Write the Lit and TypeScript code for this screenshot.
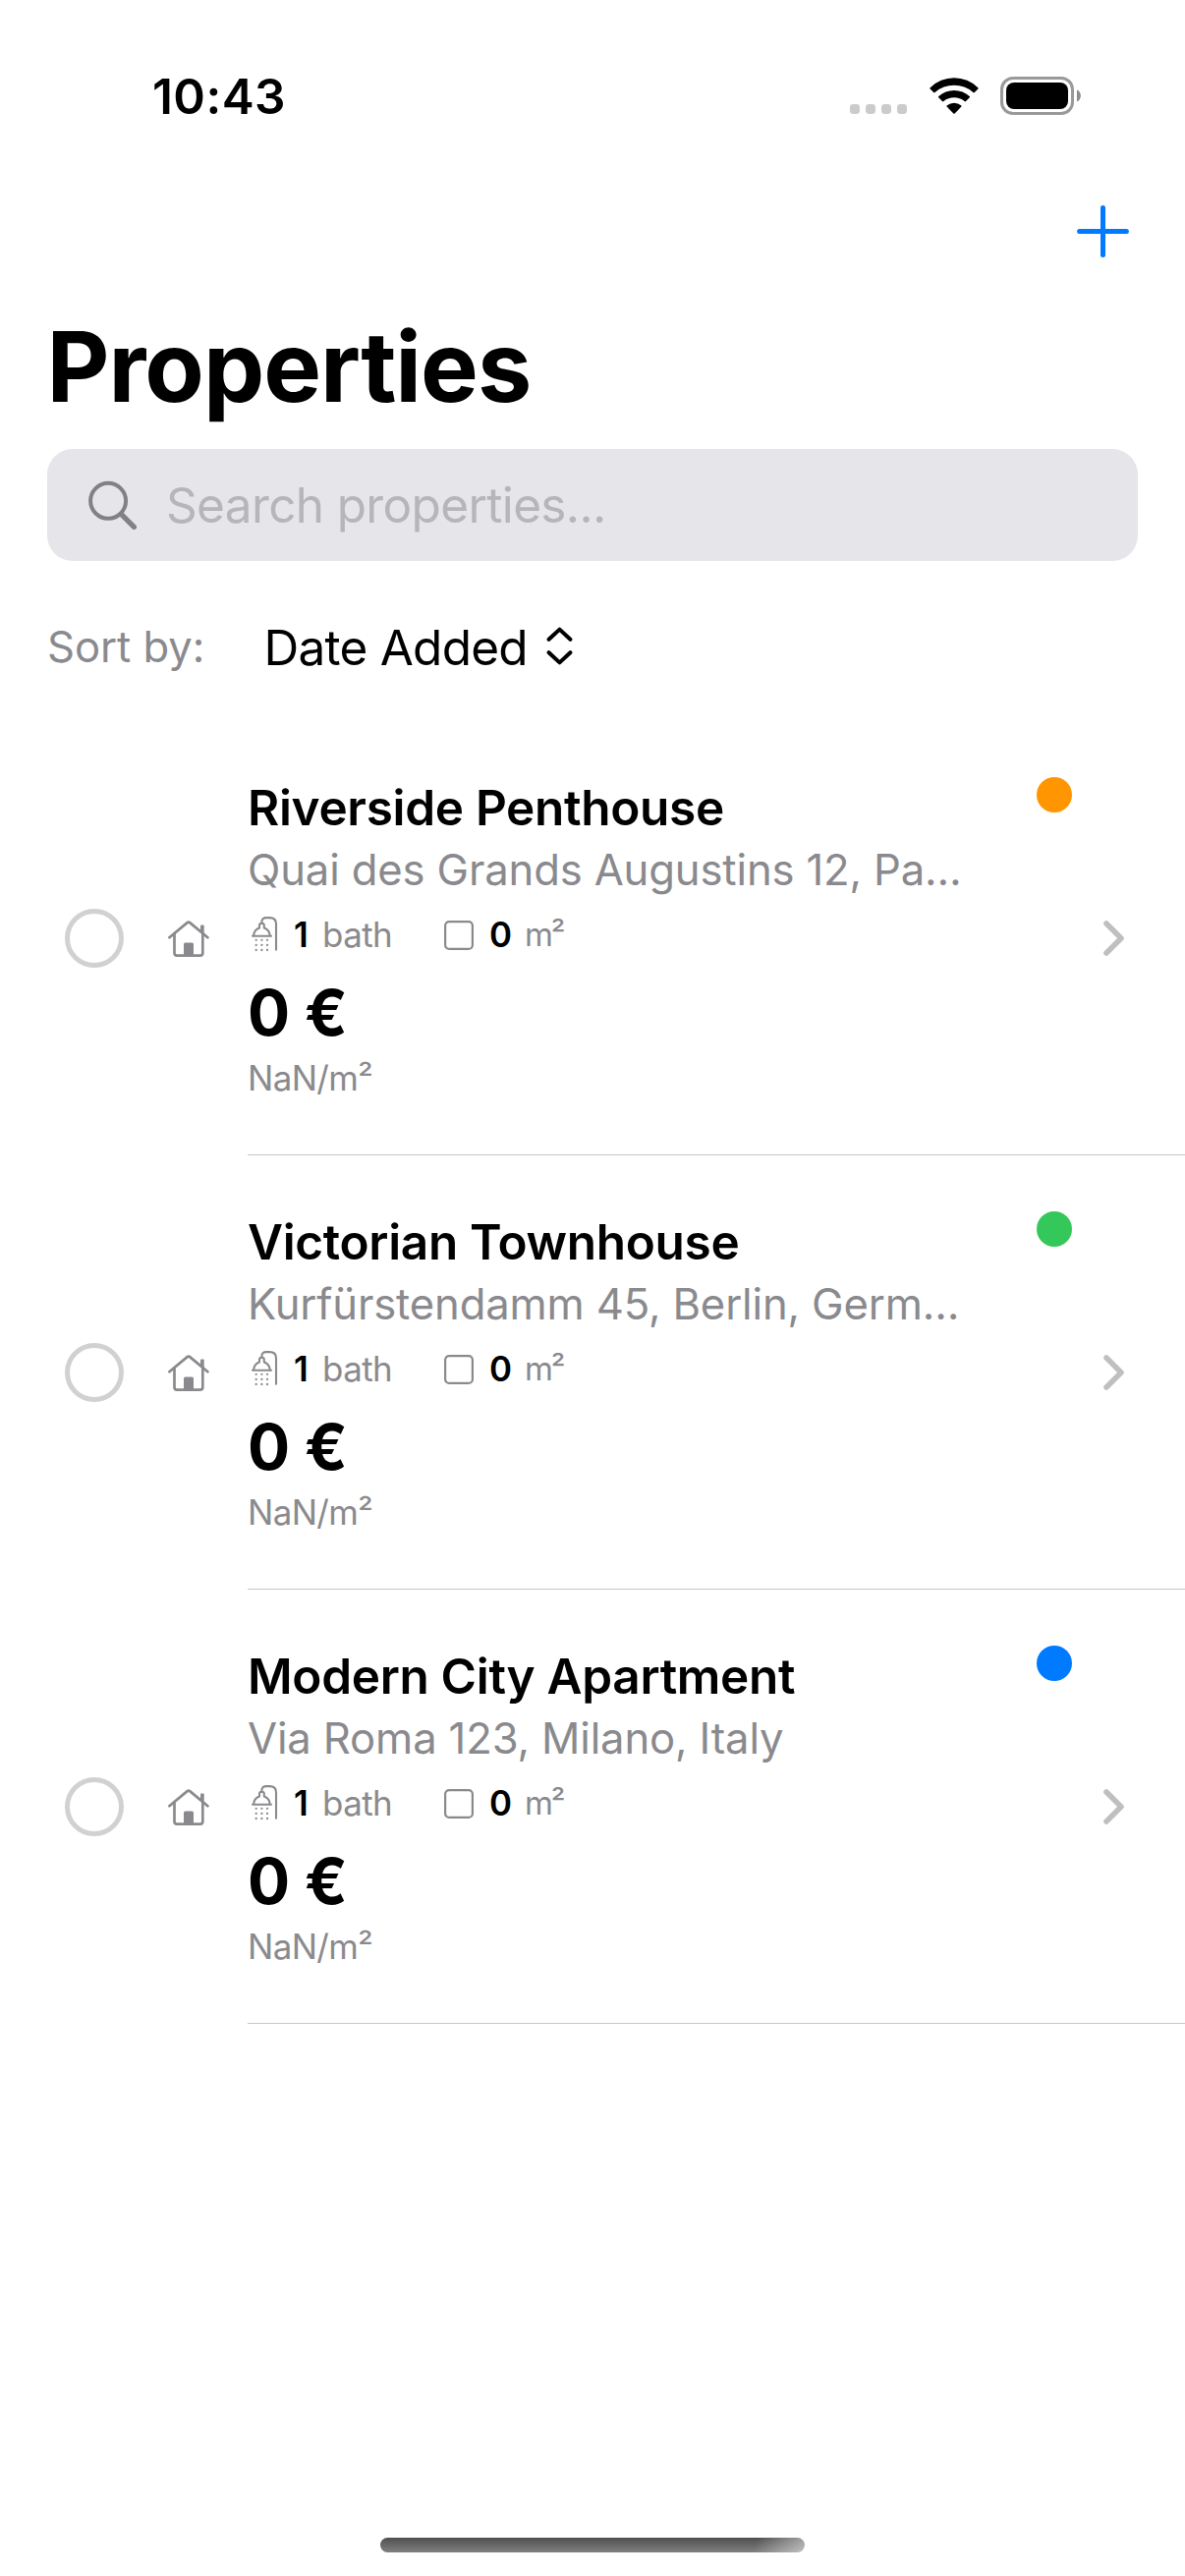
import { LitElement, html, css, svg } from "lit";
import { customElement, property } from "lit/decorators.js";
import { classMap } from "lit/directives/class-map.js";

type Status = "orange" | "green" | "blue";

interface Property {
  name: string;
  address: string;
  baths: number;
  area: number;
  price: string;
  unitPrice: string;
  status: Status;
}

const PROPERTIES: Property[] = [
  {
    name: "Riverside Penthouse",
    address: "Quai des Grands Augustins 12, Pa…",
    baths: 1,
    area: 0,
    price: "0 €",
    unitPrice: "NaN/m²",
    status: "orange",
  },
  {
    name: "Victorian Townhouse",
    address: "Kurfürstendamm 45, Berlin, Germ…",
    baths: 1,
    area: 0,
    price: "0 €",
    unitPrice: "NaN/m²",
    status: "green",
  },
  {
    name: "Modern City Apartment",
    address: "Via Roma 123, Milano, Italy",
    baths: 1,
    area: 0,
    price: "0 €",
    unitPrice: "NaN/m²",
    status: "blue",
  },
];

const showerDrops = [24.8, 29.9, 35].flatMap((y) =>
  [4.7, 10.4, 16].map((x) => svg`<circle cx=${x} cy=${y} r="1.15" fill="#8a8a8e"></circle>`)
);

@customElement("status-bar")
export class StatusBar extends LitElement {
  static styles = css`
    :host {
      display: flex;
      justify-content: space-between;
      height: 177px;
      box-sizing: border-box;
      padding: 65px 105px 0 155px;
    }
    .time {
      height: 66px;
      font-size: 49.5px;
      line-height: 66px;
      font-weight: 600;
      letter-spacing: 0.42px;
      color: #000;
    }
    .icons {
      display: flex;
      align-items: flex-start;
      padding-top: 13px;
    }
    svg {
      display: block;
      flex: none;
    }
    .cell {
      margin: 28px 22.7px 0 0;
    }
    .wifi {
      margin: 1px 22.3px 0 0;
    }
  `;

  render() {
    return html`
      <div class="time">10:43</div>
      <div class="icons">
        <svg class="cell" width="58" height="10" viewBox="0 0 58 10" fill="#cbcbcb">
          <rect x="0" width="10" height="10" rx="3.4"></rect>
          <rect x="16" width="10" height="10" rx="3.4"></rect>
          <rect x="32" width="10" height="10" rx="3.4"></rect>
          <rect x="48" width="10" height="10" rx="3.4"></rect>
        </svg>
        <svg class="wifi" width="50" height="37" viewBox="0 0 50 37" fill="#000">
          <path d="M.6 11.4Q0 10.8.7 10.2A34.4 34.4 0 0 1 49.3 10.2Q50 10.8 49.4 11.4L45.9 15Q45.2 15.7 44.4 15A29.5 29.5 0 0 0 5.6 15Q4.8 15.7 4.1 15Z"></path>
          <path d="M9.2 20.3Q8.6 19.7 9.3 19.1A23 23 0 0 1 40.7 19.1Q41.4 19.7 40.8 20.3L37 24.1Q36.3 24.8 35.6 24.1A16.9 16.9 0 0 0 14.4 24.1Q13.7 24.8 13 24.1Z"></path>
          <path d="M17.8 29.7Q17.1 29 17.9 28.3A10.9 10.9 0 0 1 32.1 28.3Q32.9 29 32.2 29.7L25.7 36.4Q25 37.1 24.3 36.4Z"></path>
        </svg>
        <svg width="83" height="39" viewBox="0 0 83 39">
          <rect x="1.5" y="1.5" width="72" height="36" rx="11.5" fill="none" stroke="#999" stroke-width="3"></rect>
          <rect x="6" y="6" width="63" height="27" rx="8" fill="#000"></rect>
          <path d="M78 13.5C83.2 15.5 83.2 23.5 78 25.5Z" fill="#8c8c8c"></path>
        </svg>
      </div>
    `;
  }
}

@customElement("property-row")
export class PropertyRow extends LitElement {
  @property({ attribute: false }) item!: Property;

  static styles = css`
    :host {
      display: block;
    }
    .row {
      display: flex;
      align-items: center;
      height: 441px;
      padding: 0 62px 0 66px;
      box-sizing: border-box;
    }
    .separator {
      height: 1px;
      margin-left: 252px;
      background: #c6c6c8;
    }
    svg {
      display: block;
      flex: none;
    }
    .select {
      flex: none;
      width: 60px;
      height: 60px;
      box-sizing: border-box;
      border: 5px solid #d1d1d3;
      border-radius: 50%;
    }
    .house {
      margin: 2px 0 0 45px;
    }
    .body {
      flex: 1;
      min-width: 0;
      align-self: flex-start;
      padding: 55px 0 0 39px;
      white-space: nowrap;
    }
    .name {
      font-size: 49.5px;
      line-height: 66px;
      font-weight: 600;
      letter-spacing: -0.32px;
      color: #000;
    }
    .address {
      padding-top: 1px;
      font-size: 43.6px;
      line-height: 60px;
      letter-spacing: -0.14px;
      color: #8a8a8e;
    }
    .meta {
      display: flex;
      height: 48px;
      padding: 11px 0 0 4px;
      font-size: 34.9px;
      line-height: 48px;
      color: #8a8a8e;
    }
    .metric {
      display: flex;
    }
    .metric.baths {
      width: 196px;
    }
    .shower {
      margin: 5px 15px 0 0;
    }
    .square {
      margin: 10px 16px 0 0;
    }
    .value {
      font-weight: 600;
      color: #000;
    }
    .baths .value {
      width: 29px;
    }
    .area .value {
      width: 36px;
    }
    .baths .unit {
      letter-spacing: -0.57px;
    }
    .area .unit {
      font-size: 33px;
      letter-spacing: -2.2px;
    }
    .price {
      margin-top: 14px;
      font-size: 64px;
      line-height: 84px;
      font-weight: 700;
      letter-spacing: -1.6px;
      word-spacing: 3px;
      color: #000;
    }
    .unit-price {
      font-size: 34.9px;
      line-height: 48px;
      letter-spacing: -0.6px;
      color: #8a8a8e;
    }
    .status {
      flex: none;
      align-self: flex-start;
      width: 36px;
      height: 36px;
      margin: 57px 32px 0 0;
      border-radius: 50%;
    }
    .orange {
      background: #ff9500;
    }
    .green {
      background: #34c759;
    }
    .blue {
      background: #007aff;
    }
  `;

  render() {
    const p = this.item;
    return html`
      <div class="row">
        <div class="select"></div>
        <svg class="house" width="42" height="37" viewBox="0 0 42 37" fill="none" stroke="#8a8a8e" stroke-width="2.7" stroke-linecap="round" stroke-linejoin="round">
          <path d="M1.4 17.2L19.6 2.1Q20.9 1.1 22.2 2.1L40.4 17.2"></path>
          <path d="M6.5 14V33Q6.5 35.6 9.1 35.6H32.7Q35.3 35.6 35.3 33V14"></path>
          <path d="M33 5.4Q33 4.4 34 4.4H35.7Q36.7 4.4 36.7 5.4V13.4L33 10.4Z" fill="#8a8a8e" stroke="none"></path>
          <path d="M16 35.6V24Q16 22.4 17.6 22.4H24.4Q26 22.4 26 24V35.6Z" fill="#8a8a8e" stroke="none"></path>
        </svg>
        <div class="body">
          <div class="name">${p.name}</div>
          <div class="address">${p.address}</div>
          <div class="meta">
            <div class="metric baths">
              <svg class="shower" width="28" height="37" viewBox="0 0 28 37" fill="none" stroke="#8a8a8e" stroke-width="2.1" stroke-linecap="round" stroke-linejoin="round">
                <path d="M10.4 7.6V6.6Q10.4 2.1 15 2.1H18.3Q25 2.1 25 8.4V34.8"></path>
                <path d="M1 20.7H20"></path>
                <path d="M2.2 20Q2.6 14.6 8 12.6V10Q8 7.8 10.4 7.8Q12.8 7.8 12.8 10V12.6Q18.2 14.6 18.6 20"></path>
                <g stroke="none">${showerDrops}</g>
              </svg>
              <span class="value">${p.baths}</span>
              <span class="unit">bath</span>
            </div>
            <div class="metric area">
              <svg class="square" width="30" height="30" viewBox="0 0 30 30" fill="none">
                <rect x="1.1" y="1.1" width="27.8" height="27.8" rx="4" stroke="#8a8a8e" stroke-width="2.2"></rect>
              </svg>
              <span class="value">${p.area}</span>
              <span class="unit">m²</span>
            </div>
          </div>
          <div class="price">${p.price}</div>
          <div class="unit-price">${p.unitPrice}</div>
        </div>
        <div class=${classMap({ status: true, [p.status]: true })}></div>
        <svg width="21" height="36" viewBox="0 0 21 36" fill="none" stroke="#bfbfbf" stroke-width="5.6" stroke-linecap="round" stroke-linejoin="round">
          <path d="M3 3L18 18L3 33"></path>
        </svg>
      </div>
      <div class="separator"></div>
    `;
  }
}

@customElement("app-root")
export class AppRoot extends LitElement {
  static styles = css`
    :host {
      display: flex;
      flex-direction: column;
      width: 1206px;
      height: 2622px;
      overflow: hidden;
      background: #fff;
      font-family: Inter, "Liberation Sans", sans-serif;
    }
    svg {
      display: block;
      flex: none;
    }
    .nav {
      display: flex;
      justify-content: flex-end;
      height: 132px;
      box-sizing: border-box;
      padding: 32px 57px 0 0;
    }
    .title {
      margin: 0;
      padding-left: 47.5px;
      height: 148px;
      box-sizing: border-box;
      padding-top: 4px;
      font-size: 98.8px;
      line-height: 120px;
      font-weight: 700;
      letter-spacing: -1.01px;
      color: #000;
    }
    .search {
      display: flex;
      align-items: center;
      height: 114px;
      margin: 0 48px;
      padding-left: 42px;
      box-sizing: border-box;
      border-radius: 26px;
      background: #e5e5ea;
    }
    .placeholder {
      margin-left: 29px;
      font-size: 49.5px;
      line-height: 66px;
      letter-spacing: -0.64px;
      color: #b5b5ba;
    }
    .sort {
      display: flex;
      height: 163px;
      padding: 55px 0 0 48px;
      box-sizing: border-box;
    }
    .sort-label {
      width: 220.5px;
      font-size: 43.6px;
      line-height: 66px;
      letter-spacing: -0.05px;
      color: #8a8a8e;
    }
    .sort-value {
      margin-right: 19.5px;
      font-size: 49.5px;
      line-height: 66px;
      letter-spacing: -0.76px;
      color: #000;
    }
    .sort-icon {
      margin-top: 12px;
    }
    .spacer {
      flex: 1;
    }
    .home {
      flex: none;
      align-self: center;
      width: 432px;
      height: 15px;
      margin-bottom: 24px;
      border-radius: 8px;
      background: linear-gradient(105deg, rgba(255, 255, 255, 0) 88%, rgba(255, 255, 255, 0.5) 100%),
        linear-gradient(#4f4f4f, #808080);
    }
  `;

  render() {
    return html`
      <status-bar></status-bar>
      <div class="nav">
        <svg width="53" height="53" viewBox="0 0 53 53" stroke="#007aff" stroke-width="5" stroke-linecap="round">
          <path d="M26.5 2.6V50.4M2.6 26.5H50.4"></path>
        </svg>
      </div>
      <h1 class="title">Properties</h1>
      <div class="search">
        <svg width="50" height="50" viewBox="0 0 50 50" fill="none" stroke="#808085" stroke-linecap="round">
          <circle cx="20.1" cy="20.8" r="18" stroke-width="4"></circle>
          <path d="M33.4 34.4L46.4 47.4" stroke-width="5.2"></path>
        </svg>
        <span class="placeholder">Search properties...</span>
      </div>
      <div class="sort">
        <span class="sort-label">Sort by:</span>
        <span class="sort-value">Date Added</span>
        <svg class="sort-icon" width="27" height="39" viewBox="0 0 27 39" fill="none" stroke="#000" stroke-width="4" stroke-linecap="round" stroke-linejoin="round">
          <path d="M2.6 12.8L13.5 2.6L24.4 12.8M2.6 26.2L13.5 36.4L24.4 26.2"></path>
        </svg>
      </div>
      ${PROPERTIES.map((p) => html`<property-row .item=${p}></property-row>`)}
      <div class="spacer"></div>
      <div class="home"></div>
    `;
  }
}
